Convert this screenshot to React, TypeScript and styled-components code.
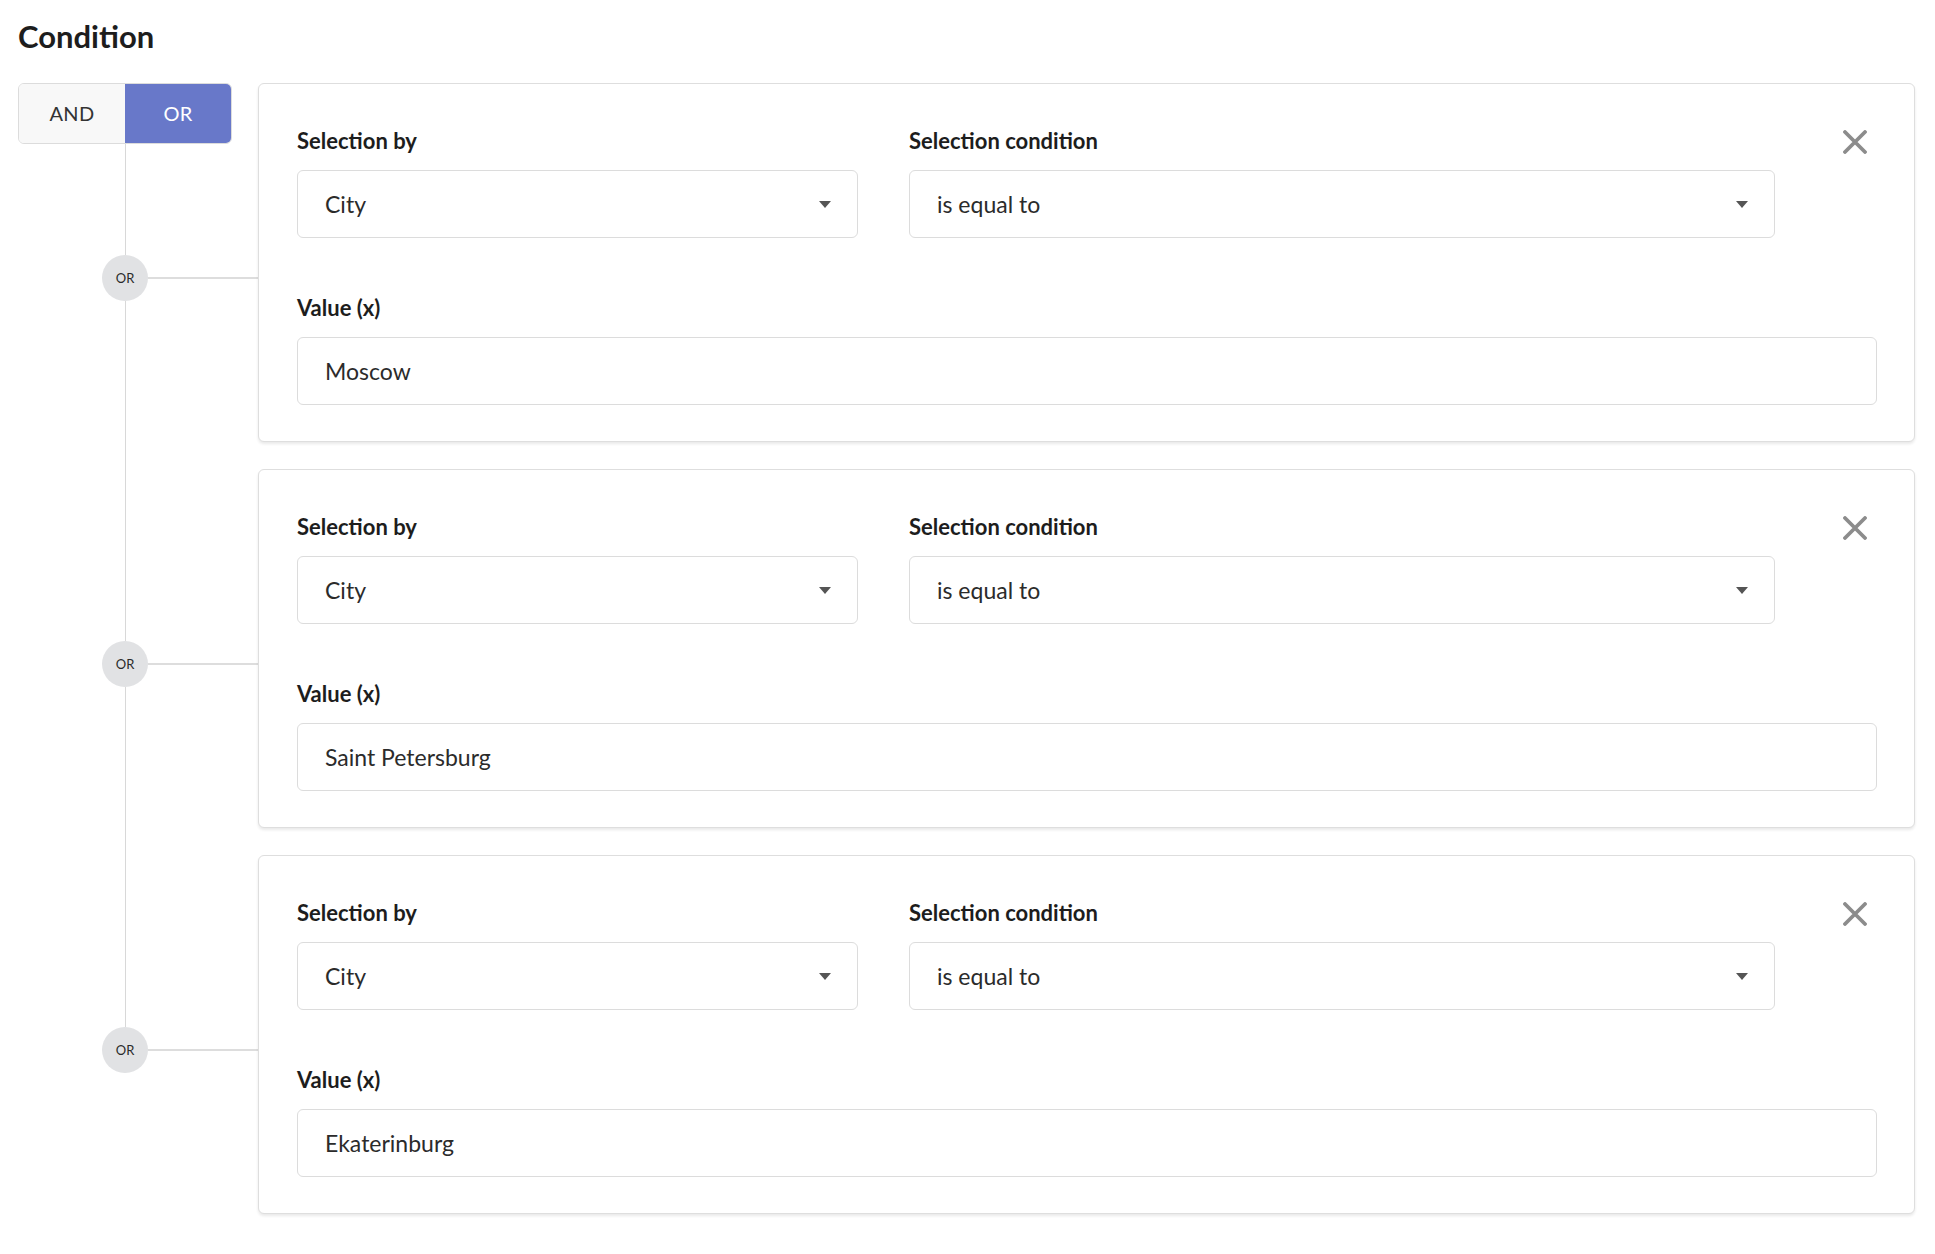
import React from 'react';
import styled, { createGlobalStyle } from 'styled-components';

const GlobalStyle = createGlobalStyle`
  body {
    margin: 0;
    background: #fff;
    font-family: Lato, "Noto Sans", sans-serif;
    color: #222;
  }
`;

const Page = styled.div`
  padding: 18px 20px 40px 18px;
`;

const Title = styled.h2`
  margin: 0 0 29px;
  font-size: 31px;
  line-height: 36px;
  font-weight: 700;
  color: #1d1d1d;
`;

const List = styled.div`
  display: flex;
  flex-direction: column;
  gap: 27px;
`;

const Row = styled.div`
  display: grid;
  grid-template-columns: 240px 1fr;
`;

const Connector = styled.div`
  display: flex;
  flex-direction: column;
`;

const Toggle = styled.div`
  display: flex;
  width: 214px;
  height: 61px;
  box-sizing: border-box;
  border: 1px solid #dcdcdc;
  border-radius: 6px;
  overflow: hidden;
`;

const ToggleButton = styled.button<{ $active?: boolean }>`
  flex: 1;
  border: 0;
  margin: 0;
  padding: 0 0 2px;
  font-family: inherit;
  font-size: 20px;
  letter-spacing: 0.3px;
  background: ${(p) => (p.$active ? '#6878c9' : '#f8f8f8')};
  color: ${(p) => (p.$active ? '#fff' : '#333')};
  cursor: pointer;
`;

const Stem = styled.div<{ $height?: number; $overlap?: number }>`
  width: 1px;
  margin-left: 107px;
  margin-top: ${(p) => (p.$overlap ? -p.$overlap : 0)}px;
  height: ${(p) => (p.$height ? `${p.$height}px` : 'auto')};
  flex: ${(p) => (p.$height ? '0 0 auto' : '1')};
  background: #d8d8d8;
`;

const NodeRow = styled.div`
  display: flex;
  align-items: center;
`;

const Node = styled.div`
  width: 46px;
  height: 46px;
  margin-left: 84px;
  border-radius: 50%;
  background: #e1e2e4;
  display: flex;
  align-items: center;
  justify-content: center;
  font-size: 13px;
  color: #2a2a2a;
  flex-shrink: 0;
`;

const Branch = styled.div`
  flex: 1;
  height: 2px;
  background: #dddddd;
`;

const Card = styled.div`
  border: 1px solid #dedede;
  border-radius: 6px;
  box-shadow: 0 2px 3px rgba(0, 0, 0, 0.09);
  background: #fff;
  padding: 44px 37px 36px 38px;
`;

const TopGrid = styled.div`
  display: grid;
  grid-template-columns: 561px 866px 1fr;
  column-gap: 51px;
  margin-bottom: 57px;
`;

const Field = styled.div`
  display: flex;
  flex-direction: column;
  gap: 16px;
`;

const Label = styled.label`
  font-size: 22px;
  line-height: 26px;
  font-weight: 700;
  color: #1d1d1d;
`;

const Box = styled.div`
  position: relative;
  height: 68px;
  box-sizing: border-box;
  border: 1px solid #dcdcdc;
  border-radius: 6px;
  padding: 0 60px 0 27px;
  display: flex;
  align-items: center;
  font-size: 23px;
  color: #2b2b2b;
`;

const Caret = styled.span`
  position: absolute;
  right: 26px;
  top: 50%;
  margin-top: -3px;
  width: 0;
  height: 0;
  border-left: 6px solid transparent;
  border-right: 6px solid transparent;
  border-top: 7px solid #555;
`;

const Close = styled.button`
  justify-self: end;
  align-self: start;
  margin: 2px 10px 0 0;
  padding: 0;
  border: 0;
  background: none;
  width: 24px;
  height: 24px;
  cursor: pointer;
`;

const rows = ['Moscow', 'Saint Petersburg', 'Ekaterinburg'];

const CrossIcon = () => (
  <svg width="24" height="24" viewBox="0 0 24 24">
    <path d="M2 2 L22 22 M22 2 L2 22" stroke="#8c8c8c" strokeWidth="3.8" strokeLinecap="round" />
  </svg>
);

const ConditionCard = ({ value }: { value: string }) => (
  <Card>
    <TopGrid>
      <Field>
        <Label>Selection by</Label>
        <Box>
          City
          <Caret />
        </Box>
      </Field>
      <Field>
        <Label>Selection condition</Label>
        <Box>
          is equal to
          <Caret />
        </Box>
      </Field>
      <Close aria-label="Remove">
        <CrossIcon />
      </Close>
    </TopGrid>
    <Field>
      <Label>Value (x)</Label>
      <Box>{value}</Box>
    </Field>
  </Card>
);

export default function App() {
  return (
    <Page>
      <GlobalStyle />
      <Title>Condition</Title>
      <List>
        {rows.map((value, i) => (
          <Row key={value}>
            <Connector>
              {i === 0 && (
                <Toggle>
                  <ToggleButton>AND</ToggleButton>
                  <ToggleButton $active>OR</ToggleButton>
                </Toggle>
              )}
              <Stem $height={i === 0 ? 111 : 199} $overlap={i === 0 ? 0 : 27} />
              <NodeRow>
                <Node>OR</Node>
                <Branch />
              </NodeRow>
              {i < rows.length - 1 && <Stem />}
            </Connector>
            <ConditionCard value={value} />
          </Row>
        ))}
      </List>
    </Page>
  );
}
